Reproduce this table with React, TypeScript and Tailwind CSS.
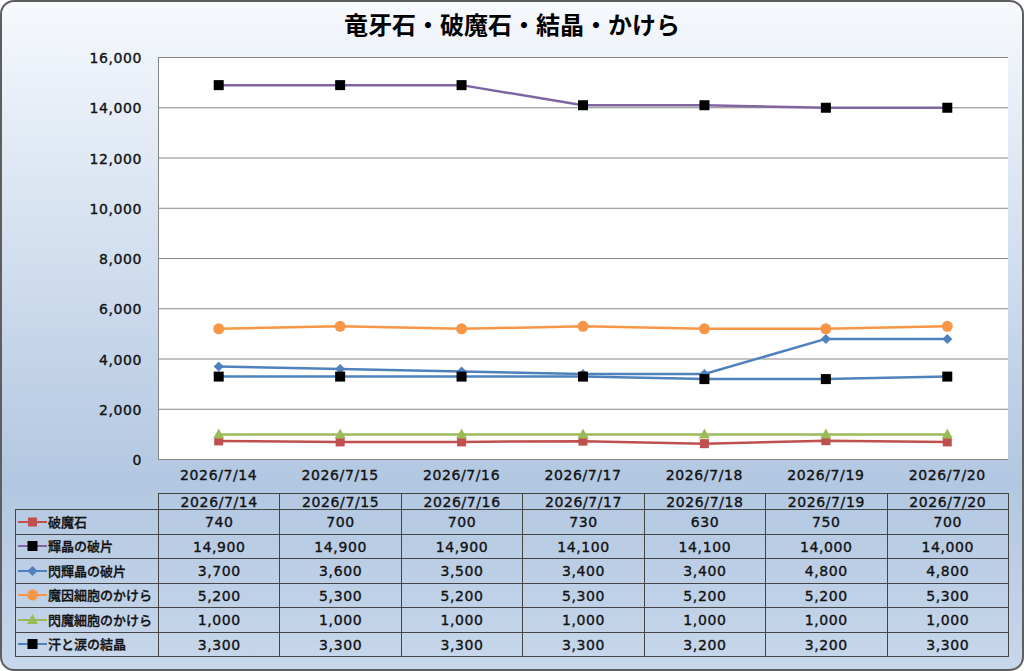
import type { ReactNode } from "react";

const dates = ["2026/7/14", "2026/7/15", "2026/7/16", "2026/7/17", "2026/7/18", "2026/7/19", "2026/7/20"];
const yTicks = ["16,000", "14,000", "12,000", "10,000", "8,000", "6,000", "4,000", "2,000", "0"];

type Marker = "square" | "diamond" | "circle" | "triangle";

type Series = {
  name: string;
  line: string;
  fill: string;
  marker: Marker;
  values: number[];
};

const series: Series[] = [
  { name: "破魔石", line: "#c0504d", fill: "#c0504d", marker: "square", values: [740, 700, 700, 730, 630, 750, 700] },
  { name: "輝晶の破片", line: "#8064a2", fill: "#000000", marker: "square", values: [14900, 14900, 14900, 14100, 14100, 14000, 14000] },
  { name: "閃輝晶の破片", line: "#4f81bd", fill: "#4f81bd", marker: "diamond", values: [3700, 3600, 3500, 3400, 3400, 4800, 4800] },
  { name: "魔因細胞のかけら", line: "#f79646", fill: "#f79646", marker: "circle", values: [5200, 5300, 5200, 5300, 5200, 5200, 5300] },
  { name: "閃魔細胞のかけら", line: "#9bbb59", fill: "#9bbb59", marker: "triangle", values: [1000, 1000, 1000, 1000, 1000, 1000, 1000] },
  { name: "汗と涙の結晶", line: "#4f81bd", fill: "#000000", marker: "square", values: [3300, 3300, 3300, 3300, 3200, 3200, 3300] },
];

const PLOT_W = 850;
const PLOT_H = 402;
const step = PLOT_W / 7;

const xAt = (i: number) => step / 2 + i * step;
const yAt = (v: number) => 0.5 + PLOT_H - (v / 16000) * PLOT_H;

function MarkerShape({ kind, x, y, fill, big }: { kind: Marker; x: number; y: number; fill: string; big?: boolean }) {
  if (kind === "square") {
    const s = big ? 10 : 9;
    return <rect x={x - s / 2} y={y - s / 2} width={s} height={s} fill={fill} />;
  }
  if (kind === "diamond") {
    return <polygon points={`${x},${y - 5} ${x + 5},${y} ${x},${y + 5} ${x - 5},${y}`} fill={fill} />;
  }
  if (kind === "circle") {
    return <circle cx={x} cy={y} r={5.5} fill={fill} />;
  }
  return <polygon points={`${x},${y - 6} ${x + 5.5},${y + 4} ${x - 5.5},${y + 4}`} fill={fill} />;
}

function Chart() {
  return (
    <svg width={PLOT_W + 1} height={PLOT_H + 1} className="block overflow-visible">
      <rect x={0} y={0} width={PLOT_W} height={PLOT_H} fill="#ffffff" />
      {yTicks.map((_, i) => (
        <line key={i} x1={0} x2={PLOT_W} y1={0.5 + (i * PLOT_H) / 8} y2={0.5 + (i * PLOT_H) / 8} stroke="#868686" strokeWidth={1} />
      ))}
      <line x1={0.5} x2={0.5} y1={0} y2={PLOT_H + 1} stroke="#868686" strokeWidth={1} />
      {series.map((s) => (
        <g key={s.name}>
          <polyline
            points={s.values.map((v, i) => `${xAt(i)},${yAt(v)}`).join(" ")}
            fill="none"
            stroke={s.line}
            strokeWidth={2.5}
            strokeLinejoin="round"
          />
          {s.values.map((v, i) => (
            <MarkerShape key={i} kind={s.marker} x={xAt(i)} y={yAt(v)} fill={s.fill} big={s.fill === "#000000"} />
          ))}
        </g>
      ))}
    </svg>
  );
}

function LegendKey({ s }: { s: Series }) {
  return (
    <svg width={29} height={12} className="shrink-0">
      <line x1={0} x2={29} y1={6} y2={6} stroke={s.line} strokeWidth={2} />
      <MarkerShape kind={s.marker} x={14.5} y={6} fill={s.fill} big={s.fill === "#000000"} />
    </svg>
  );
}

function Num({ children }: { children: ReactNode }) {
  return (
    <span className="font-['DejaVu_Sans','Noto_Sans_CJK_JP',sans-serif] tracking-[0.6px] [-webkit-text-stroke:0.35px_#111]">
      {children}
    </span>
  );
}

export default function App() {
  return (
    <div className="w-[1024px] h-[671px] overflow-hidden">
      <div className="w-[1024px] h-[671px] border-2 border-[#5e5e5e] rounded-[14px] bg-linear-to-b from-[#f6f9fd] via-[#b2c7e1] via-72% to-[#c7d7eb] text-[#111] font-['Noto_Sans_CJK_JP',sans-serif]">
        {/* Title */}
        <div className="h-[55px] pt-[6px] text-center">
          <h1 className="text-[24px] leading-[32px] font-bold text-black">竜牙石・破魔石・結晶・かけら</h1>
        </div>

        {/* Plot */}
        <div className="flex">
          <div className="w-[156px] h-[422px] -mt-[10px] -mb-[9px] pr-[16px] flex flex-col justify-between items-end text-[14px]">
            {yTicks.map((t) => (
              <div key={t} className="h-5 leading-5">
                <Num>{t}</Num>
              </div>
            ))}
          </div>
          <Chart />
        </div>

        {/* X axis labels */}
        <div className="flex pl-[156px] h-[33px] pt-[4px] text-[14px]">
          {dates.map((d) => (
            <div key={d} className="w-[121.43px] text-center leading-5">
              <Num>{d}</Num>
            </div>
          ))}
        </div>

        {/* Data table */}
        <table className="ml-[13px] border-collapse text-[14px] table-fixed">
          <colgroup>
            <col className="w-[143px]" />
            {dates.map((d) => (
              <col key={d} className="w-[121.43px]" />
            ))}
          </colgroup>
          <thead>
            <tr className="h-[15.5px]">
              <th className="p-0" />
              {dates.map((d) => (
                <th key={d} className="p-0 font-normal text-center leading-[14px] border border-[#454545]">
                  <Num>{d}</Num>
                </th>
              ))}
            </tr>
          </thead>
          <tbody>
            {series.map((s) => (
              <tr key={s.name} className="h-[24.5px]">
                <td className="p-0 border border-[#454545]">
                  <div className="flex items-center gap-[1px] pl-[2px] text-[13px] font-medium leading-4 whitespace-nowrap [-webkit-text-stroke:0.3px_#111]">
                    <LegendKey s={s} />
                    <span>{s.name}</span>
                  </div>
                </td>
                {s.values.map((v, i) => (
                  <td key={i} className="p-0 text-center border border-[#454545] leading-5">
                    <Num>{v.toLocaleString("en-US")}</Num>
                  </td>
                ))}
              </tr>
            ))}
          </tbody>
        </table>
      </div>
    </div>
  );
}
